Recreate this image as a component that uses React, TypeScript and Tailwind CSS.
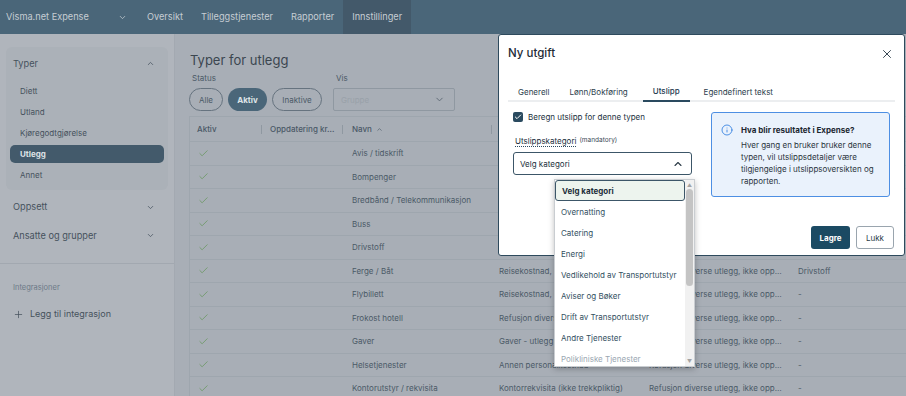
import { Check, ChevronDown, ChevronUp, Info, Plus, X } from 'lucide-react';

const topNav = ['Oversikt', 'Tilleggstjenester', 'Rapporter', 'Innstillinger'];
const typer = ['Diett', 'Utland', 'Kjøregodtgjørelse', 'Utlegg', 'Annet'];

const rows = [
  { navn: 'Avis / tidskrift', konto: 'Kontorrekvisita (ikke trekkpliktig)', lonn: 'Refusjon diverse utlegg, ikke oppgavepliktig', kat: 'Aviser og Bøker' },
  { navn: 'Bompenger', konto: 'Reisekostnad, ikke oppgavepliktig', lonn: 'Refusjon diverse utlegg, ikke oppgavepliktig', kat: '-' },
  { navn: 'Bredbånd / Telekommunikasjon', konto: 'Telefon', lonn: 'Refusjon diverse utlegg, ikke oppgavepliktig', kat: '-' },
  { navn: 'Buss', konto: 'Reisekostnad, ikke oppgavepliktig', lonn: 'Refusjon diverse utlegg, ikke oppgavepliktig', kat: '-' },
  { navn: 'Drivstoff', konto: 'Reisekostnad, ikke oppgavepliktig', lonn: 'Refusjon diverse utlegg, ikke oppgavepliktig', kat: 'Drivstoff' },
  { navn: 'Ferge / Båt', konto: 'Reisekostnad, ikke oppgavepliktig', lonn: 'Refusjon diverse utlegg, ikke oppgavepliktig', kat: 'Drivstoff' },
  { navn: 'Flybillett', konto: 'Reisekostnad, ikke oppgavepliktig', lonn: 'Refusjon diverse utlegg, ikke oppgavepliktig', kat: '-' },
  { navn: 'Frokost hotell', konto: 'Refusjon diverse utlegg', lonn: 'Refusjon diverse utlegg, ikke oppgavepliktig', kat: '-' },
  { navn: 'Gaver', konto: 'Gaver - utlegg', lonn: 'Refusjon diverse utlegg, ikke oppgavepliktig', kat: '-' },
  { navn: 'Helsetjenester', konto: 'Annen personalkostnad', lonn: 'Refusjon diverse utlegg, ikke oppgavepliktig', kat: '-' },
  { navn: 'Kontorutstyr / rekvisita', konto: 'Kontorrekvisita (ikke trekkpliktig)', lonn: 'Refusjon diverse utlegg, ikke oppgavepliktig', kat: '-' },
];

const kategorier = [
  'Velg kategori',
  'Overnatting',
  'Catering',
  'Energi',
  'Vedlikehold av Transportutstyr',
  'Aviser og Bøker',
  'Drift av Transportutstyr',
  'Andre Tjenester',
  'Polikliniske Tjenester',
];

const tabs = ['Generell', 'Lønn/Bokføring', 'Utslipp', 'Egendefinert tekst'];

export default function App() {
  return (
    <div className="relative w-[906px] h-[396px] overflow-hidden bg-[#a8aeb6] font-['Inter',sans-serif]">
      {/* ---------- top bar ---------- */}
      <header className="flex h-[34px] bg-[#4a6679] text-[9.2px] text-[#c6cdd3]">
        <div className="flex w-[138px] items-center justify-between pl-[6px] pr-[11px]">
          <span>Visma.net Expense</span>
          <ChevronDown size={9} strokeWidth={2} />
        </div>
        {topNav.map((item) => (
          <div
            key={item}
            className={`flex items-center px-[9px] ${item === 'Innstillinger' ? 'bg-[#43596a]' : ''}`}
          >
            {item}
          </div>
        ))}
      </header>

      <div className="flex h-[362px]">
        {/* ---------- sidebar ---------- */}
        <aside className="w-[175px] shrink-0 bg-[#b0b5bc] border-r border-[#a3a9b1] text-[#46525d]">
          <div className="px-[6px] pt-[13px]">
            <div className="rounded-[6px] bg-[#abb1b8] pb-[5px]">
              <div className="flex h-[33px] items-center justify-between pl-[7px] pr-[13px] text-[9.2px]">
                <span>Typer</span>
                <ChevronUp size={9} strokeWidth={2} />
              </div>
              <ul className="px-[4px] text-[8px]">
                {typer.map((t) => (
                  <li key={t} className="h-[21px] py-[1.5px]">
                    <div
                      className={`flex h-full items-center rounded-[5px] px-[10px] ${
                        t === 'Utlegg' ? 'bg-[#435a6b] font-bold text-[#dde2e6]' : ''
                      }`}
                    >
                      {t}
                    </div>
                  </li>
                ))}
              </ul>
            </div>
            <div className="mt-[3px] flex h-[28px] items-center justify-between pl-[7px] pr-[13px] text-[9.2px]">
              <span>Oppsett</span>
              <ChevronDown size={9} strokeWidth={2} />
            </div>
            <div className="flex h-[29px] items-center justify-between pl-[7px] pr-[13px] text-[9.2px]">
              <span>Ansatte og grupper</span>
              <ChevronDown size={9} strokeWidth={2} />
            </div>
          </div>
          <div className="mt-[13px] border-t border-[#a2a8b0] px-[13px] pt-[18px]">
            <div className="text-[7.5px] text-[#6c7987]">Integrasjoner</div>
            <div className="mt-[14px] flex items-center gap-[6px] text-[9px] text-[#46525d]">
              <Plus size={11} strokeWidth={1.6} />
              <span>Legg til integrasjon</span>
            </div>
          </div>
        </aside>

        {/* ---------- main ---------- */}
        <main className="flex-1 pl-[14px] pt-[17px] text-[#4b5a67]">
          <h1 className="pl-[1px] text-[13px] leading-[18px] text-[#3b4650]">Typer for utlegg</h1>

          <div className="mt-[4px] flex">
            <div className="w-[144px]">
              <div className="pl-[3px] text-[8px] leading-[10px]">Status</div>
              <div className="mt-[5px] flex gap-[5px] text-[8px]">
                <span className="flex h-[23px] w-[34px] items-center justify-center rounded-full border border-[#66737f]">Alle</span>
                <span className="flex h-[23px] w-[39px] items-center justify-center rounded-full bg-[#4a6679] font-bold text-[#dfe4e8]">Aktiv</span>
                <span className="flex h-[23px] w-[50px] items-center justify-center rounded-full border border-[#66737f]">Inaktive</span>
              </div>
            </div>
            <div>
              <div className="pl-[3px] text-[8px] leading-[10px]">Vis</div>
              <div className="mt-[5px] flex h-[23px] w-[122px] items-center justify-between rounded-[2px] border border-[#8f98a1] pl-[7px] pr-[9px] text-[8px] text-[#99a1a9]">
                <span>Gruppe</span>
                <ChevronDown size={11} strokeWidth={2} className="text-[#5c6874]" />
              </div>
            </div>
          </div>

          {/* table */}
          <div className="mt-[5px] border-l border-t border-[#9ea6ae] text-[8px]">
            <div className="flex h-[25px] items-center border-b border-[#9ea6ae] font-medium text-[#4a5866]">
              <div className="flex w-[72px] items-center justify-between pl-[7px]">
                Aktiv<span className="h-[9px] w-px bg-[#8f98a1]" />
              </div>
              <div className="flex w-[81px] items-center justify-between pl-[8px]">
                Oppdatering kr...<span className="h-[9px] w-px bg-[#8f98a1]" />
              </div>
              <div className="flex w-[149px] items-center justify-between pl-[9px]">
                <span className="flex items-center gap-[4px]">
                  Navn <ChevronUp size={7} strokeWidth={2.2} />
                </span>
                <span className="h-[9px] w-px bg-[#8f98a1]" />
              </div>
              <div className="w-[150px] pl-[7px]">Kontotype</div>
              <div className="w-[149px] pl-[7px]">Lønnsart</div>
              <div className="whitespace-nowrap pl-[7px]">Kategori</div>
            </div>
            {rows.map((r) => (
              <div key={r.navn} className="flex h-[23.5px] items-center border-b border-[#9ea6ae]">
                <div className="w-[72px] pl-[8px]">
                  <Check size={11} strokeWidth={1.6} className="text-[#64955a]" />
                </div>
                <div className="w-[81px]" />
                <div className="w-[149px] truncate pl-[9px]">{r.navn}</div>
                <div className="w-[150px] truncate pl-[7px]">{r.konto}</div>
                <div className="w-[149px] truncate pl-[7px] pr-[8px]">{r.lonn}</div>
                <div className="whitespace-nowrap pl-[7px]">{r.kat}</div>
              </div>
            ))}
          </div>
        </main>
      </div>

      {/* ---------- modal ---------- */}
      <div className="absolute left-[498px] top-[34px] h-[222px] w-[407px] rounded-[3px] border border-[#2e4a5d] bg-white text-[#22313d]">
        <div className="flex h-[38px] items-center justify-between pl-[9px] pr-[10px]">
          <h2 className="text-[11.5px] font-medium text-[#1e2b36]">Ny utgift</h2>
          <X size={14} strokeWidth={1.6} className="text-[#2b3a47]" />
        </div>

        <div className="mx-[9px] mt-[9px] flex h-[20px] border-b-2 border-[#eceef0] text-[8px]">
          {tabs.map((t) => (
            <div
              key={t}
              className={`-mb-[2px] flex items-center px-[10px] ${
                t === 'Utslipp' ? 'ml-[5px] border-b-2 border-[#2a4a5f] font-medium text-[#1d3a4f]' : 'text-[#2c3e4c]'
              } ${t === 'Egendefinert tekst' ? 'ml-[4px]' : ''}`}
            >
              {t}
            </div>
          ))}
        </div>

        <div className="flex gap-[19px] px-[14px] pt-[10px]">
          <div className="w-[180px]">
            <label className="flex h-[10px] items-center gap-[5px] text-[8px]">
              <span className="flex h-[10px] w-[10px] items-center justify-center rounded-[2px] bg-[#2a4a5f]">
                <Check size={8} strokeWidth={3} className="text-white" />
              </span>
              Beregn utslipp for denne typen
            </label>
            <div className="mt-[14px] flex h-[10px] items-center gap-[3px] pl-[2px]">
              <span className="border-b border-dotted border-[#2a4a5f] text-[8px] leading-[10px]">Utslippskategori</span>
              <span className="text-[6.5px] text-[#3b4a56]">(mandatory)</span>
            </div>
            <div className="mt-[6px] flex h-[23px] items-center justify-between rounded-[3px] border-[1.5px] border-[#3c5668] pl-[6px] pr-[7px] text-[8px]">
              <span>Velg kategori</span>
              <ChevronUp size={12} strokeWidth={2.2} className="text-[#2b3a47]" />
            </div>
          </div>

          <div className="flex h-[85px] w-[180px] gap-[8px] rounded-[3px] border border-[#4d8fe3] bg-[#eaf2fc] px-[9px] pt-[11px]">
            <Info size={12} strokeWidth={1.7} className="shrink-0 text-[#2f7ee0]" />
            <div className="text-[8px] leading-[12px] text-[#2a3540]">
              <div className="font-bold text-[#1c2731]">Hva blir resultatet i Expense?</div>
              <p className="mt-[3px]">
                Hver gang en bruker bruker denne typen, vil utslippsdetaljer være tilgjengelige i utslippsoversikten og rapporten.
              </p>
            </div>
          </div>
        </div>

        <div className="mt-[29px] flex justify-end gap-[6px] pr-[10px] text-[8px]">
          <button className="h-[23px] w-[39px] rounded-[3px] bg-[#1b4a63] font-bold text-white">Lagre</button>
          <button className="h-[23px] w-[38px] rounded-[3px] border border-[#9aa5ae] bg-white text-[#2a3b48]">Lukk</button>
        </div>

        {/* native-like select popup */}
        <div className="absolute left-[55px] top-[144px] flex h-[188px] w-[141px] border border-[#c9cdd1] bg-white shadow-[0_2px_6px_rgba(0,0,0,0.25)]">
          <ul className="flex-1 text-[8px] text-[#33505f]">
            {kategorier.map((k, i) => (
              <li
                key={k}
                className={`flex h-[21px] items-center whitespace-nowrap px-[6px] ${
                  i === 0 ? 'rounded-[3px] border border-[#3c5668] bg-[#edf4ee] font-bold text-[#1d2e3a]' : ''
                } ${i === kategorier.length - 1 ? 'text-[#9aa7b2]' : ''}`}
              >
                {k}
              </li>
            ))}
          </ul>
          <div className="flex w-[9px] flex-col items-center bg-[#f1f1f1]">
            <span className="mt-[2px] text-[5px] leading-[6px] text-[#a3a3a3]">▲</span>
            <div className="mt-[1px] h-[97px] w-[7px] rounded-full bg-[#c4c4c4]" />
            <span className="mb-[2px] mt-auto text-[5px] leading-[6px] text-[#a3a3a3]">▼</span>
          </div>
        </div>
      </div>
    </div>
  );
}
